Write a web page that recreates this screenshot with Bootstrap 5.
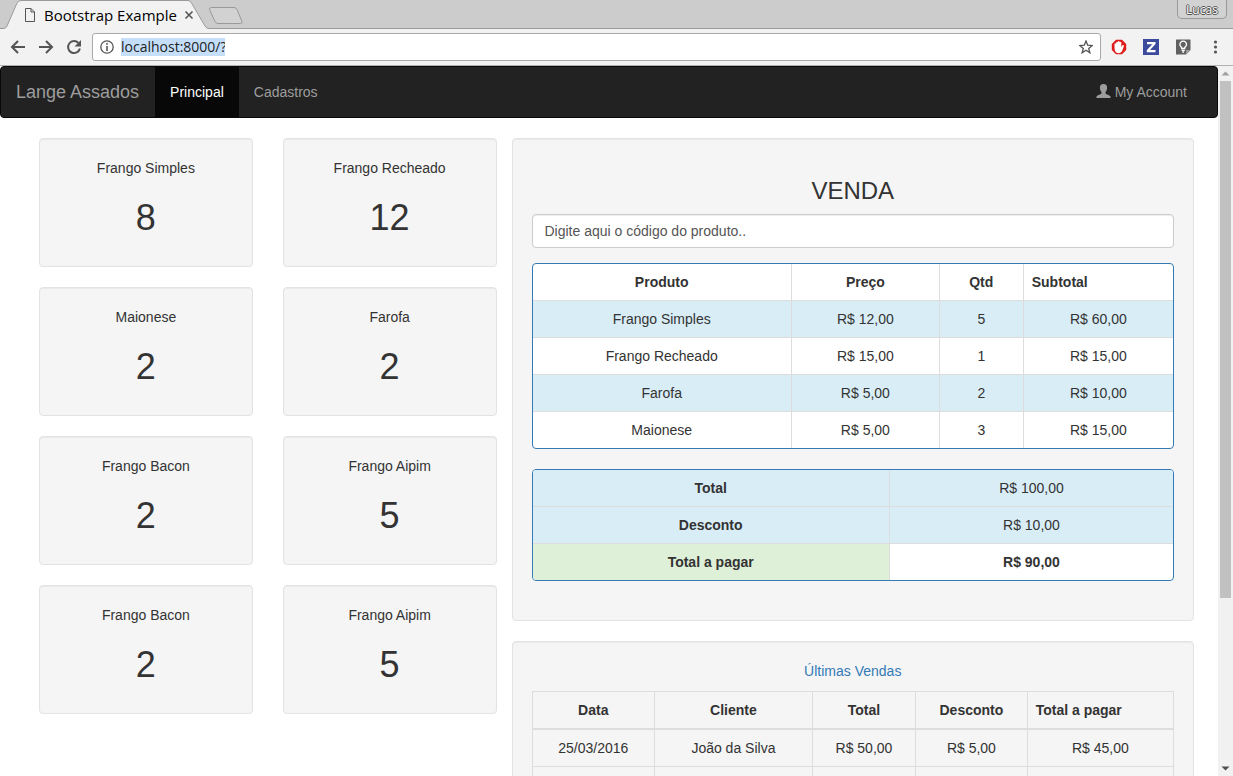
<!DOCTYPE html>
<html lang="pt-BR">
<head>
<meta charset="utf-8">
<meta name="viewport" content="width=device-width, initial-scale=1">
<title>Bootstrap Example</title>
<link rel="stylesheet" href="https://cdn.jsdelivr.net/npm/bootstrap@5.3.0/dist/css/bootstrap.min.css">
<style>
  body { font-family: "Liberation Sans", Arial, sans-serif; font-size: 14px; line-height: 20px; color: #333; background: #fff; }
  svg { display: block; flex: none; }
  button { border: 0; padding: 0; background: none; }

  /* browser window */
  .tab-strip { height: 29px; background: #ccc; border-bottom: 1px solid #999; font-family: "Open Sans", sans-serif; }
  .browser-tab { width: 212px; height: 29px; margin-bottom: -1px; padding: 1px 0 0 22px; color: #000; font-size: 15px; }
  .tab-shape { position: absolute; left: 0; top: 0; z-index: 0; }
  .browser-tab > :not(.tab-shape) { position: relative; }
  .tab-title { margin-left: 6px; }
  .new-tab { margin: 6px 0 0 -4px; }
  .profile-btn { width: 50px; height: 19px; margin-right: 6px; border: 1px solid #999; border-top: 0; border-radius: 0 0 5px 5px; background: #d2d2d2; color: #fff; font-size: 12px; line-height: 20px; text-shadow: 1px 0 #555, -1px 0 #555, 0 1px #555, 0 -1px #555; }
  .toolbar { height: 37px; padding: 0 10px; gap: 10px; background: #f2f2f2; border-bottom: 1px solid #b0b0b0; }
  .tool-group { gap: 12px; }
  .ext-group { gap: 16px; }
  .address { height: 28px; padding: 0 7px; border: 1px solid #a9a9a9; border-radius: 3px; background: #fff; }
  .address input { width: 104px; height: 18px; margin-left: 7px; padding: 0; border: 0; outline: 0; background: #c5dffa; color: #222; font: 14px/18px "Open Sans", sans-serif; }
  .scroll-track { width: 15px; background: #f1f1f1; }
  .scroll-thumb { width: 11px; height: 76%; background: #c1c1c1; }

  /* page */
  .site-nav { padding: 0; margin-bottom: 20px; background: #222; border: 1px solid #080808; border-radius: 4px; }
  .site-nav .navbar-brand { margin: 0; padding: 15px 16px 15px 15px; font-size: 18px; line-height: 20px; color: #9d9d9d; }
  .site-nav .nav-link { padding: 15px !important; color: #9d9d9d; }
  .site-nav .nav-link.active { color: #fff; background: #080808; }
  .account { margin-right: 15px; }
  .page-box { max-width: 1170px; }
  .stock-col { padding: 0 15px; }
  .well { padding: 19px; margin-bottom: 20px; background: #f5f5f5; border: 1px solid #e3e3e3; border-radius: 4px; box-shadow: inset 0 1px 1px rgba(0,0,0,.05); text-align: center; }
  .well h2 { margin: 20px 0 10px; font-size: 36px; line-height: 39px; font-weight: 500; }
  .well h3 { margin: 0 0 10px; padding-top: 20px; font-size: 24px; line-height: 26px; font-weight: 500; }
  .code-input { height: 34px; margin-bottom: 15px; padding: 6px 12px; border: 1px solid #ccc; border-radius: 4px; font-size: 14px; line-height: 20px; box-shadow: inset 0 1px 1px rgba(0,0,0,.075); }
  .code-input::placeholder { color: #555; }
  .sale-panel { margin-bottom: 20px; border: 1px solid #337ab7; border-radius: 4px; background: #fff; overflow: hidden; }
  .grid-table { width: 100%; table-layout: fixed; border-collapse: separate; border-spacing: 0; }
  .grid-table th, .grid-table td { padding: 8px; border: 0 solid #ddd; border-width: 0 1px 1px 0; text-align: center; }
  .grid-table th.head-left { text-align: left; }
  .sale-panel th:last-child, .sale-panel td:last-child { border-right: 0; }
  .sale-panel tbody tr:last-child > * { border-bottom: 0; }
  .row-info > * { background: #d9edf7; }
  .cell-pay { background: #dff0d8; }
  .history { margin-top: 10px; border: 1px solid #ddd; border-width: 1px 0 0 1px; }
  .history thead th { border-bottom-width: 2px; }
  .history-link { color: #337ab7; text-decoration: none; }
</style>
</head>
<body>
<div class="vh-100 d-flex flex-column overflow-hidden">
  <header class="flex-shrink-0">
    <div class="tab-strip d-flex align-items-start">
      <div class="browser-tab position-relative d-flex align-items-center">
        <svg class="tab-shape" width="212" height="29" viewBox="0 0 212 29"><path d="M0 29V28.500H3Q6 28.500 7 26L17 3Q18.500.5 21 .5H188Q190.500.5 191.500 3L205 26Q206.500 28.500 209 28.500H212V29Z" fill="#f2f2f2"/><path d="M7 26L17 3Q18.500.5 21 .5H188Q190.500.5 191.500 3L205 26L206.500 29H5.500Z" fill="#f2f2f2"/><path d="M0 28.500H3Q6 28.500 7 26L17 3Q18.500.5 21 .5H188Q190.500.5 191.500 3L205 26Q206.500 28.500 209 28.500H212" fill="none" stroke="#999"/></svg>
        <svg width="16" height="16" viewBox="0 0 16 16" fill="none" stroke="#555"><path d="M3.500 1.500H9L12.500 5V14.500H3.500ZM9 1.500V5H12.500"/></svg>
        <span class="tab-title text-nowrap">Bootstrap Example</span>
        <button class="ms-auto me-3" type="button" aria-label="Fechar aba"><svg width="14" height="14" viewBox="0 0 14 14" stroke="#555" stroke-width="1.600"><path d="M3.500 3.500l7 7M10.500 3.500l-7 7"/></svg></button>
      </div>
      <button class="new-tab" type="button" aria-label="Nova aba"><svg width="36" height="19" viewBox="0 0 36 19"><path d="M3.500 1.500H26Q28 1.500 29 3.500L34 15.500Q34.500 17.500 32.500 17.500H10Q8 17.500 7 15.500L1.500 3.500Q1 1.500 3.500 1.500Z" fill="#d2d2d2" stroke="#999"/></svg></button>
      <button class="profile-btn ms-auto" type="button">Lucas</button>
    </div>
    <div class="toolbar d-flex align-items-center">
      <div class="tool-group d-flex">
        <button type="button" aria-label="Voltar"><svg width="16" height="16" viewBox="0 0 16 16" fill="none" stroke="#555" stroke-width="2"><path d="M15 8H2.500M8 2L2 8l6 6"/></svg></button>
        <button type="button" aria-label="Avançar"><svg width="16" height="16" viewBox="0 0 16 16" fill="none" stroke="#555" stroke-width="2"><path d="M1 8h12.500M8 2l6 6-6 6"/></svg></button>
        <button type="button" aria-label="Recarregar"><svg width="16" height="16" viewBox="0 0 16 16"><path d="M12.500 4A6 6 0 1 0 13.900 9.500" fill="none" stroke="#555" stroke-width="2"/><path d="M15 1v6.500H8.500Z" fill="#555"/></svg></button>
      </div>
      <div class="address d-flex align-items-center flex-grow-1">
        <svg width="14" height="14" viewBox="0 0 14 14"><circle cx="7" cy="7" r="6.200" fill="none" stroke="#555" stroke-width="1.300"/><path d="M7 3v1.800M7 6v5" stroke="#555" stroke-width="1.600"/></svg>
        <input type="text" value="localhost:8000/?" aria-label="Endereço">
        <button class="ms-auto" type="button" aria-label="Favoritar"><svg width="14" height="14" viewBox="0 0 14 14"><path d="M7 1l1.700 4.200 4.500.3-3.500 2.900 1.200 4.400L7 10.300l-3.900 2.500 1.200-4.400L.8 5.500l4.500-.3Z" fill="none" stroke="#555" stroke-width="1.300"/></svg></button>
      </div>
      <div class="ext-group d-flex">
        <button type="button" aria-label="Bloqueador de anúncios"><svg width="16" height="16" viewBox="0 0 16 16"><path d="M5 .8h6L15.200 5v6L11 15.200H5L.8 11V5Z" fill="#e01b1b"/><path d="M3.500 9V4.800q.9-1 1.700 0V3.300q.9-1 1.700 0V2.400q.9-.9 1.700 0V3.300q.9-1 1.700 0V8l1.200-1.700q1.200-.6 1.500.4L11 12.200Q9.800 14.300 7.300 14.300 3.700 13.800 3.500 9Z" fill="#fff"/></svg></button>
        <button type="button" aria-label="Extensão Z"><svg width="16" height="16" viewBox="0 0 16 16"><path d="M0 0h16v16H0Z" fill="#3b4a9c"/><path d="M4 3h8.500v2L7 11h5.500v2.200H3.800v-2L9.300 5.200H4Z" fill="#fff"/></svg></button>
        <button type="button" aria-label="Notas"><svg width="16" height="16" viewBox="0 0 16 16"><path d="M1.500.5h13.500q.5 0 .5.500V11l-4.500 4.500H1.500Q1 15.500 1 15V1Q1 .5 1.500.5Z" fill="#616161"/><path d="M11 15.500V11h4.500Z" fill="#999"/><path d="M6.700 9.500V8.400A3.300 3.300 0 1 1 9.700 8.400V9.500ZM6.600 11.300h3.200M7.300 13h1.800" fill="none" stroke="#fff" stroke-width="1.300"/></svg></button>
        <button type="button" aria-label="Menu"><svg width="16" height="16" viewBox="0 0 16 16" fill="#555"><circle cx="8.500" cy="3" r="1.600"/><circle cx="8.500" cy="8" r="1.600"/><circle cx="8.500" cy="13" r="1.600"/></svg></button>
      </div>
    </div>
  </header>

  <div class="d-flex flex-grow-1 overflow-hidden">
    <div class="flex-grow-1 overflow-hidden">
      <nav class="site-nav navbar navbar-expand">
        <a class="navbar-brand" href="#">Lange Assados</a>
        <ul class="navbar-nav">
          <li class="nav-item"><a class="nav-link active" href="#" aria-current="page">Principal</a></li>
          <li class="nav-item"><a class="nav-link" href="#">Cadastros</a></li>
        </ul>
        <ul class="navbar-nav ms-auto account">
          <li class="nav-item"><a class="nav-link d-flex gap-1" href="#"><svg width="15" height="17" viewBox="0 0 15 17" fill="#9d9d9d"><path d="M7.500 2C10 2 11.200 3.500 11.100 5.900 11 7.800 10.400 8.900 9.500 9.900V11.500C9.800 12.200 13.500 13.200 14.200 14.100 14.600 14.700 14.600 15.500 14.600 16H.4C.4 15.500.4 14.700.8 14.100 1.500 13.200 5.200 12.200 5.500 11.500V9.900C4.600 8.900 4 7.800 3.900 5.900 3.800 3.500 5 2 7.500 2Z"/></svg>My Account</a></li>
        </ul>
      </nav>

      <main class="page-box container-fluid px-0">
        <div class="row g-0">
          <div class="col-5">
            <div class="row g-0">
              <div class="col-6 stock-col"><div class="well">Frango Simples<h2>8</h2></div></div>
              <div class="col-6 stock-col"><div class="well">Frango Recheado<h2>12</h2></div></div>
              <div class="col-6 stock-col"><div class="well">Maionese<h2>2</h2></div></div>
              <div class="col-6 stock-col"><div class="well">Farofa<h2>2</h2></div></div>
              <div class="col-6 stock-col"><div class="well">Frango Bacon<h2>2</h2></div></div>
              <div class="col-6 stock-col"><div class="well">Frango Aipim<h2>5</h2></div></div>
              <div class="col-6 stock-col"><div class="well">Frango Bacon<h2>2</h2></div></div>
              <div class="col-6 stock-col"><div class="well">Frango Aipim<h2>5</h2></div></div>
            </div>
          </div>

          <div class="col-7">
            <section class="well">
              <h3>VENDA</h3>
              <input class="form-control code-input" type="text" placeholder="Digite aqui o código do produto.." aria-label="Código do produto">
              <div class="sale-panel">
                <table class="grid-table">
                  <colgroup><col style="width:40.5%"><col style="width:23.1%"><col style="width:13.1%"><col></colgroup>
                  <thead><tr><th>Produto</th><th>Preço</th><th>Qtd</th><th class="head-left">Subtotal</th></tr></thead>
                  <tbody>
                    <tr class="row-info"><td>Frango Simples</td><td>R$ 12,00</td><td>5</td><td>R$ 60,00</td></tr>
                    <tr><td>Frango Recheado</td><td>R$ 15,00</td><td>1</td><td>R$ 15,00</td></tr>
                    <tr class="row-info"><td>Farofa</td><td>R$ 5,00</td><td>2</td><td>R$ 10,00</td></tr>
                    <tr><td>Maionese</td><td>R$ 5,00</td><td>3</td><td>R$ 15,00</td></tr>
                  </tbody>
                </table>
              </div>
              <div class="sale-panel">
                <table class="grid-table">
                  <colgroup><col style="width:55.8%"><col></colgroup>
                  <tbody>
                    <tr class="row-info"><th>Total</th><td>R$ 100,00</td></tr>
                    <tr class="row-info"><th>Desconto</th><td>R$ 10,00</td></tr>
                    <tr><th class="cell-pay">Total a pagar</th><td class="fw-bold">R$ 90,00</td></tr>
                  </tbody>
                </table>
              </div>
            </section>

            <section class="well">
              <a class="history-link d-block" href="#">Últimas Vendas</a>
              <table class="grid-table history">
                <colgroup><col style="width:19.1%"><col style="width:24.6%"><col style="width:16.1%"><col style="width:17.4%"><col></colgroup>
                <thead><tr><th>Data</th><th>Cliente</th><th>Total</th><th>Desconto</th><th class="head-left">Total a pagar</th></tr></thead>
                <tbody>
                  <tr><td>25/03/2016</td><td>João da Silva</td><td>R$ 50,00</td><td>R$ 5,00</td><td>R$ 45,00</td></tr>
                  <tr><td>&nbsp;</td><td></td><td></td><td></td><td></td></tr>
                </tbody>
              </table>
            </section>
          </div>
        </div>
      </main>
    </div>

    <div class="scroll-track d-flex flex-column align-items-center flex-shrink-0" aria-hidden="true">
      <svg width="15" height="15" viewBox="0 0 15 15"><path d="M3.500 9.500L7.500 5.500 11.500 9.500Z" fill="#a0a0a0"/></svg>
      <div class="flex-grow-1 d-flex w-100 justify-content-center"><div class="scroll-thumb"></div></div>
      <svg width="15" height="15" viewBox="0 0 15 15"><path d="M3.500 5.500L7.500 9.500 11.500 5.500Z" fill="#505050"/></svg>
    </div>
  </div>
</div>
<script src="https://cdn.jsdelivr.net/npm/bootstrap@5.3.0/dist/js/bootstrap.bundle.min.js"></script>
</body>
</html>
